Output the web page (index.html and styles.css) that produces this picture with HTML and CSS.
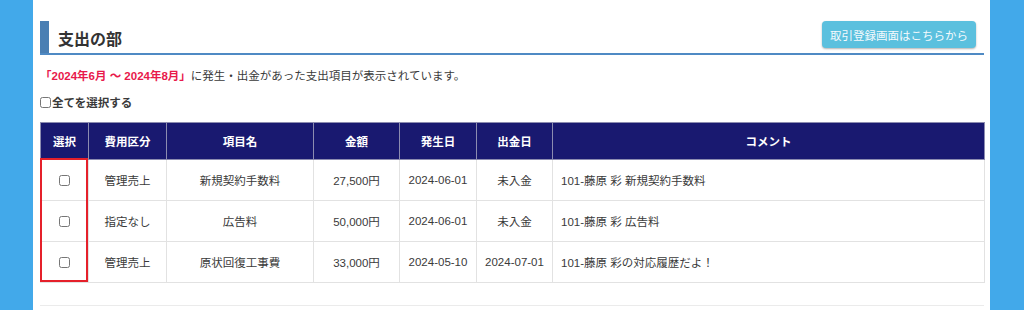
FILE: index.html
```html
<!DOCTYPE html>
<html lang="ja">
<head>
<meta charset="utf-8">
<link rel="stylesheet" href="styles.css">
</head>
<body>
<div class="main">
  <div class="section-head">
    <h2 class="title">支出の部</h2>
    <a class="btn-info">取引登録画面はこちらから</a>
  </div>
  <p class="notice"><span class="period">「2024年6月 ～ 2024年8月」</span>に発生・出金があった支出項目が表示されています。</p>
  <label class="select-all"><input type="checkbox" class="cb-all">全てを選択する</label>
  <div class="table-wrap">
    <table class="list">
      <colgroup>
        <col class="c1"><col class="c2"><col class="c3"><col class="c4"><col class="c5"><col class="c6"><col class="c7">
      </colgroup>
      <thead>
        <tr><th>選択</th><th>費用区分</th><th>項目名</th><th>金額</th><th>発生日</th><th>出金日</th><th>コメント</th></tr>
      </thead>
      <tbody>
        <tr><td><input type="checkbox"></td><td>管理売上</td><td>新規契約手数料</td><td>27,500円</td><td>2024-06-01</td><td>未入金</td><td class="comment">101-藤原 彩 新規契約手数料</td></tr>
        <tr><td><input type="checkbox"></td><td>指定なし</td><td>広告料</td><td>50,000円</td><td>2024-06-01</td><td>未入金</td><td class="comment">101-藤原 彩 広告料</td></tr>
        <tr><td><input type="checkbox"></td><td>管理売上</td><td>原状回復工事費</td><td>33,000円</td><td>2024-05-10</td><td>2024-07-01</td><td class="comment">101-藤原 彩の対応履歴だよ！</td></tr>
      </tbody>
    </table>
    <div class="highlight"></div>
  </div>
  <div class="bottom-line"></div>
</div>
</body>
</html>
```

FILE: styles.css
```css
html, body {
  margin: 0;
  padding: 0;
}
body {
  background: #42a9ea;
  font-family: "Liberation Sans", "Noto Sans CJK JP", sans-serif;
  font-size: 11.5px;
  color: #3a3a3a;
  height: 310px;
  overflow: hidden;
}
.main {
  background: #fff;
  margin: 0 34px 0 33px;
  height: 310px;
  padding: 21px 6px 0 7px;
  box-sizing: border-box;
}
.section-head {
  display: flex;
  justify-content: space-between;
  align-items: flex-start;
  border-bottom: 2px solid #4f8ac4;
  height: 32px;
}
.title {
  margin: 0;
  height: 32px;
  border-left: 9px solid #4a7fb3;
  padding-left: 9px;
  display: flex;
  align-items: center;
  font-size: 16px;
  font-weight: bold;
  color: #333;
  padding-top: 1px;
  box-sizing: border-box;
}
.btn-info {
  margin-right: 8px;
  width: 154px;
  height: 27px;
  background: #5bc0de;
  border-radius: 4px;
  box-shadow: 0 1px 2px rgba(0,0,0,0.3);
  color: #f4fafd;
  font-size: 11.5px;
  display: flex;
  align-items: center;
  justify-content: center;
}
.notice {
  margin: 12px 0 0 0;
  line-height: 18px;
  font-size: 11.5px;
}
.period {
  color: #e8194b;
  font-weight: bold;
}
.select-all {
  display: flex;
  align-items: center;
  margin-top: 8px;
  font-weight: bold;
  height: 18px;
}
.cb-all {
  margin: 0 1px 0 0;
  width: 11px;
  height: 11px;
}
.table-wrap {
  position: relative;
  margin-top: 11px;
}
.list {
  width: 944px;
  border-collapse: collapse;
  table-layout: fixed;
}
.c1 { width: 48px; }
.c2 { width: 78px; }
.c3 { width: 147px; }
.c4 { width: 86px; }
.c5 { width: 77px; }
.c6 { width: 76px; }
.c7 { width: 432px; }
.list th {
  background: #191970;
  color: #fff;
  font-weight: bold;
  height: 36px;
  padding: 0;
  border: 1px solid #8c8cb0;
  text-align: center;
}
.list td {
  height: 40px;
  padding: 0;
  border: 1px solid #e2e2e2;
  text-align: center;
  vertical-align: middle;
}
.list td input {
  margin: 0;
  width: 11px;
  height: 11px;
  vertical-align: middle;
}
.list td.comment {
  text-align: left;
  padding-left: 8px;
}
.highlight {
  position: absolute;
  left: 0;
  top: 36px;
  width: 48px;
  height: 124px;
  border: 2px solid #e5202a;
  box-sizing: border-box;
}
.bottom-line {
  margin-top: 22px;
  border-top: 1px solid #ebebeb;
}
```
